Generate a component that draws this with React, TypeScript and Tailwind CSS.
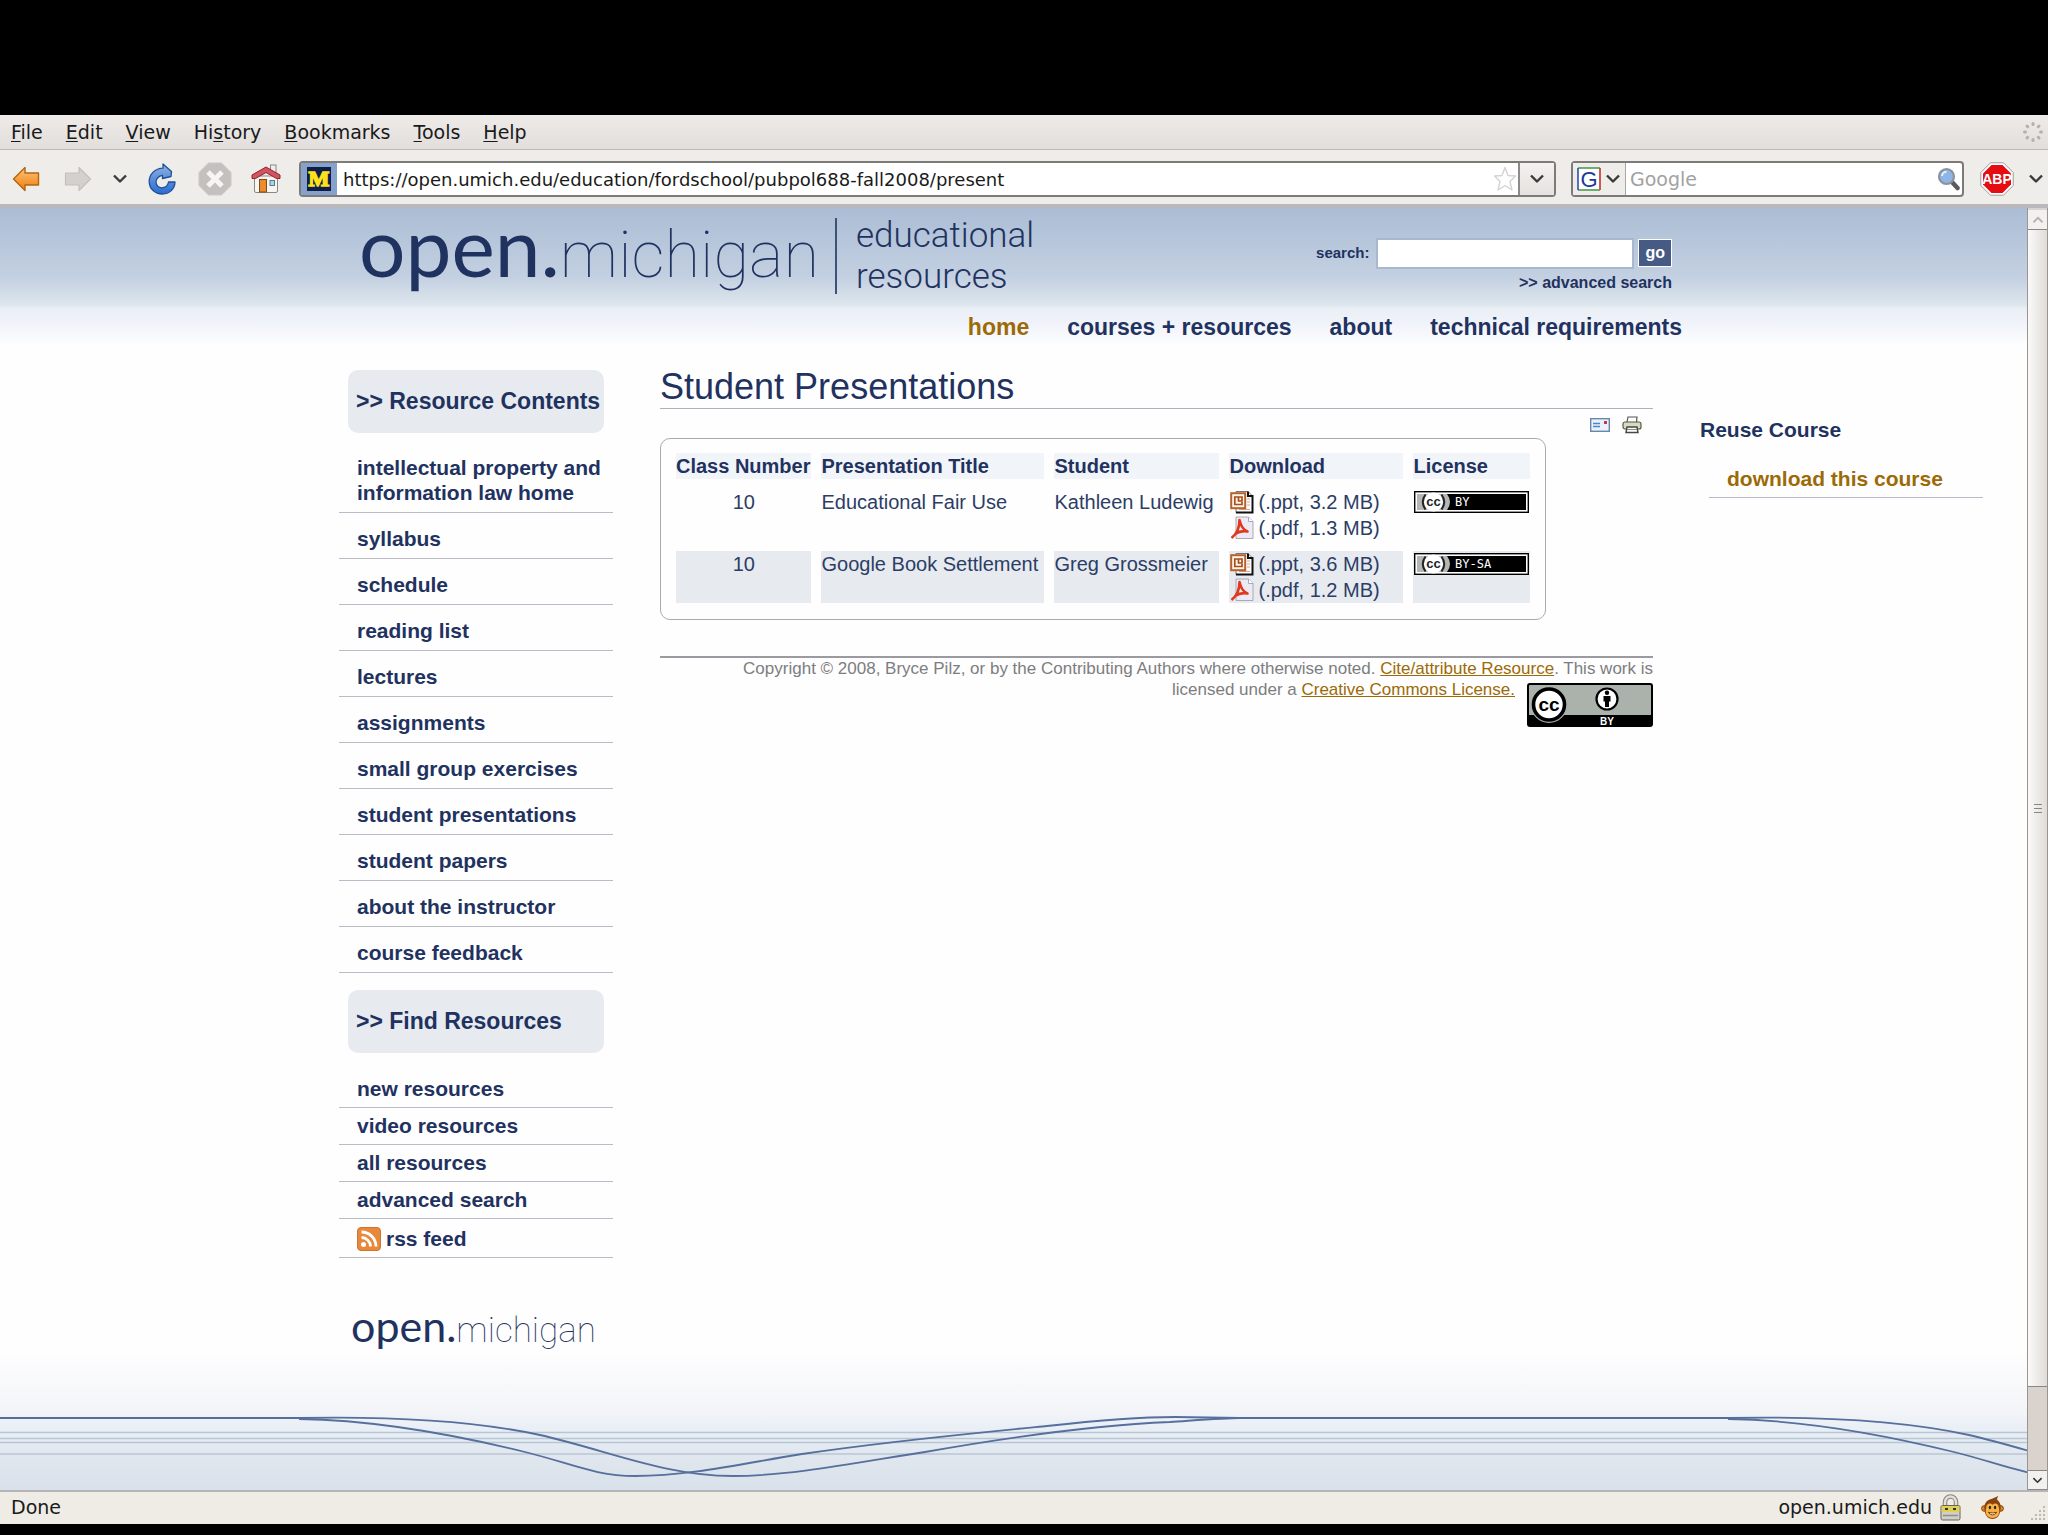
import React from "react";

function ChevronDown({ size = 16, color = "#3a3a3a" }: { size?: number; color?: string }) {
  return (
    <svg width={size} height={size} viewBox="0 0 16 16" aria-hidden="true">
      <path d="M2 4.5 L8 10.5 L14 4.5" fill="none" stroke={color} strokeWidth="2.4" strokeLinejoin="round" />
    </svg>
  );
}

function MenuItem({ before = "", hot, after }: { before?: string; hot: string; after: string }) {
  return (
    <button type="button" className="whitespace-nowrap">
      {before}
      <span className="underline underline-offset-2">{hot}</span>
      {after}
    </button>
  );
}

function Spinner() {
  return (
    <svg width="22" height="22" viewBox="0 0 22 22" aria-hidden="true">
      {[0, 45, 90, 135, 180, 225, 270, 315].map((a) => (
        <rect key={a} x="9.5" y="1" width="3" height="4" rx="1.5" fill="#b3b0ad" transform={`rotate(${a} 11 11)`} />
      ))}
    </svg>
  );
}

function MenuBar() {
  return (
    <nav className="flex h-[35px] items-center gap-[23px] border-b border-[#bdb9b6] bg-linear-to-b from-[#eeebe9] to-[#e2dedb] pl-[11px] pr-1 text-[19px] text-[#1a1a1a]">
      <MenuItem hot="F" after="ile" />
      <MenuItem hot="E" after="dit" />
      <MenuItem hot="V" after="iew" />
      <MenuItem before="Hi" hot="s" after="tory" />
      <MenuItem hot="B" after="ookmarks" />
      <MenuItem hot="T" after="ools" />
      <MenuItem hot="H" after="elp" />
      <span className="ml-auto">
        <Spinner />
      </span>
    </nav>
  );
}

function BackIcon() {
  return (
    <svg width="28" height="26" viewBox="0 0 28 26" aria-hidden="true">
      <defs>
        <linearGradient id="back" x1="0" y1="0" x2="0" y2="1">
          <stop offset="0" stopColor="#fcc57c" />
          <stop offset="1" stopColor="#ee7d0c" />
        </linearGradient>
      </defs>
      <path d="M1.5 13 L13 1.5 V7 H26.5 V19 H13 V24.5 Z" fill="url(#back)" stroke="#b5640e" strokeWidth="1.4" strokeLinejoin="round" />
    </svg>
  );
}

function ForwardIcon() {
  return (
    <svg width="28" height="26" viewBox="0 0 28 26" aria-hidden="true">
      <path d="M26.5 13 L15 1.5 V7 H1.5 V19 H15 V24.5 Z" fill="#d3d0cd" stroke="#c3c0bd" strokeWidth="1.2" strokeLinejoin="round" />
    </svg>
  );
}

function ReloadIcon() {
  return (
    <svg width="28" height="32" viewBox="0 0 28 32" aria-hidden="true">
      <defs>
        <linearGradient id="reload" x1="0" y1="0" x2="0" y2="1">
          <stop offset="0" stopColor="#8fb3e3" />
          <stop offset="1" stopColor="#2a6bd0" />
        </linearGradient>
      </defs>
      <path
        d="M15 1 L23.5 8.5 L23 13.5 L14.5 15.5 V12.3 C10.500 12.8 8 16 8 19 C8 23 11 25.3 15 24.7 C18 24.2 20 22 20.500 19 H27 C26.8 26 21.500 31 14.500 31 C7 31 1.200 26 1.200 18.500 C1.200 11 7 5.500 15 5.200 Z"
        fill="url(#reload)"
        stroke="#1f4f9c"
        strokeWidth="1.3"
        strokeLinejoin="round"
      />
    </svg>
  );
}

function StopIcon() {
  return (
    <svg width="34" height="34" viewBox="0 0 34 34" aria-hidden="true">
      <path d="M10.5 1 H23.5 L33 10.5 V23.5 L23.5 33 H10.5 L1 23.5 V10.5 Z" fill="#c3c0bd" stroke="#cbc8c5" />
      <path d="M10 10 L24 24 M24 10 L10 24" stroke="#f6f5f4" strokeWidth="5" />
    </svg>
  );
}

function HomeIcon() {
  return (
    <svg width="30" height="30" viewBox="0 0 30 30" aria-hidden="true">
      <rect x="19.5" y="1" width="5.5" height="9" fill="#eee" stroke="#888" />
      <path d="M3.500 12 H26.5 V27 Q26.5 28.5 25 28.5 H5 Q3.500 28.5 3.500 27 Z" fill="#f7f5f2" stroke="#8c8782" />
      <path d="M15 3 L29 11 V14.500 H25.500 L15 8.500 L4.500 14.500 H1 V11 Z" fill="#cf5560" stroke="#96202b" strokeLinejoin="round" />
      <rect x="8.500" y="15.500" width="7" height="12.500" fill="#ef8a2a" stroke="#7c4a1b" />
      <rect x="19" y="16.500" width="4.500" height="5" fill="#a9d5e8" stroke="#5e7a88" />
    </svg>
  );
}

function MichiganFavicon() {
  return (
    <svg width="36" height="32" viewBox="0 0 36 32" aria-hidden="true">
      <rect width="36" height="32" fill="#86a1cc" />
      <rect x="6" y="4" width="24" height="24" fill="#0d1e4b" />
      <text x="18" y="23" textAnchor="middle" fontSize="22" fontWeight="700" fontFamily="Liberation Serif, serif" fill="#ffe11a" stroke="#ffe11a" strokeWidth="1.6">
        M
      </text>
    </svg>
  );
}

function StarIcon() {
  return (
    <svg width="24" height="28" viewBox="0 0 24 28" aria-hidden="true">
      <path d="M12 2.500 L15 10.500 L22.500 11 L17 16.600 L19 25 L12 20.500 L5 25 L7 16.600 L1.500 11 L9 10.500 Z" fill="#fefefe" stroke="#d3d3d3" strokeWidth="1.400" strokeLinejoin="round" />
    </svg>
  );
}

function MagnifierIcon() {
  return (
    <svg width="24" height="24" viewBox="0 0 24 24" aria-hidden="true">
      <path d="M15 15 L20.500 21" stroke="#5b5b5b" strokeWidth="4.500" strokeLinecap="round" />
      <circle cx="9.500" cy="9.500" r="7.500" fill="#8db6e6" stroke="#8b929c" strokeWidth="2.200" />
      <path d="M5 9 A4.500 4.500 0 0 1 9.500 4.700" stroke="#e6f1fc" strokeWidth="2" fill="none" />
    </svg>
  );
}

function GoogleIcon() {
  return (
    <svg width="24" height="24" viewBox="0 0 24 24" aria-hidden="true">
      <rect x="1" y="1" width="22" height="22" fill="#fff" />
      <path d="M1 1 H23" stroke="#4f9a4f" strokeWidth="1.600" />
      <path d="M23 1 V23" stroke="#c32f2f" strokeWidth="1.600" />
      <path d="M1 23 H23" stroke="#4f9a4f" strokeWidth="1.600" />
      <path d="M1 1 V23" stroke="#2b4fb0" strokeWidth="1.600" />
      <text x="12" y="20" textAnchor="middle" fontSize="22" fontFamily="Liberation Sans, sans-serif" fill="#1b3a9a">
        G
      </text>
    </svg>
  );
}

function AdblockIcon() {
  return (
    <svg width="34" height="34" viewBox="0 0 34 34" aria-hidden="true">
      <path d="M10.500 .8 H23.500 L33.200 10.500 V23.500 L23.500 33.200 H10.500 L.8 23.500 V10.500 Z" fill="#fff" stroke="#9a9a9a" />
      <path d="M11.500 3 H22.500 L31 11.500 V22.500 L22.500 31 H11.500 L3 22.500 V11.500 Z" fill="#e30d12" />
      <text x="17" y="22" textAnchor="middle" fontSize="14" fontWeight="700" fontFamily="Liberation Sans, sans-serif" fill="#fff">
        ABP
      </text>
    </svg>
  );
}

function Toolbar() {
  return (
    <div className="flex h-[58px] items-center border-b-4 border-[#b9b9bd] bg-[#efedea] pl-3 pr-1 pt-1">
      <div className="flex w-[287px] shrink-0 items-center">
        <button type="button" aria-label="Back" className="w-[52px]">
          <BackIcon />
        </button>
        <button type="button" aria-label="Forward" className="w-[48px]">
          <ForwardIcon />
        </button>
        <button type="button" aria-label="Recent pages" className="w-[36px]">
          <ChevronDown />
        </button>
        <button type="button" aria-label="Reload" className="w-[50px]">
          <ReloadIcon />
        </button>
        <button type="button" aria-label="Stop" className="w-[53px]">
          <StopIcon />
        </button>
        <button type="button" aria-label="Home">
          <HomeIcon />
        </button>
      </div>
      <div className="flex h-9 min-w-0 flex-1 items-center rounded-sm border-2 border-[#7d7a77] bg-white">
        <MichiganFavicon />
        <input
          aria-label="Location"
          defaultValue="https://open.umich.edu/education/fordschool/pubpol688-fall2008/present"
          className="ml-[6px] min-w-0 flex-1 bg-transparent text-[18px] text-[#1a1a1a] outline-none"
        />
        <button type="button" aria-label="Bookmark this page" className="mr-px">
          <StarIcon />
        </button>
        <button type="button" aria-label="Show history" className="flex h-full w-[36px] items-center justify-center border-l-2 border-[#8d8a87] bg-linear-to-b from-[#f4f2f0] to-[#e4e1de]">
          <ChevronDown />
        </button>
      </div>
      <div className="ml-[15px] flex h-9 w-[393px] items-center rounded-sm border-2 border-[#7d7a77] bg-white">
        <button type="button" aria-label="Choose search engine" className="flex h-full w-[53px] items-center justify-center gap-1 border-r border-[#a9a6a3] bg-[#efedea]">
          <GoogleIcon />
          <ChevronDown />
        </button>
        <input aria-label="Web search" placeholder="Google" className="ml-1 min-w-0 flex-1 bg-transparent text-[19px] outline-none placeholder:text-[#a2a2a2]" />
        <button type="button" aria-label="Search" className="mr-px">
          <MagnifierIcon />
        </button>
      </div>
      <button type="button" aria-label="Adblock Plus" className="ml-4">
        <AdblockIcon />
      </button>
      <button type="button" aria-label="Adblock menu" className="ml-[14px]">
        <ChevronDown />
      </button>
    </div>
  );
}

function HeaderLogo() {
  return (
    <div className="flex items-center font-normal text-[#1f3260]">
      <a href="#home" className="-ml-[2px] flex items-baseline pb-3 leading-[72px]">
        <span className="font-['Lato'] text-[82px]">open.</span>
        <span className="font-['Roboto'] text-[65px] font-thin">michigan</span>
      </a>
      <div className="ml-4 flex h-[76px] items-center border-l-2 border-[#3d5278] pl-[19px] font-['Roboto'] text-[35px] font-light leading-[41px]">
        <p>
          educational
          <br />
          resources
        </p>
      </div>
    </div>
  );
}

function Header() {
  return (
    <header className="h-[138px] bg-[linear-gradient(#abbdd5,#c3d0e1_50%,#dde6ed_70%,#eaeff5_73%,#f0f3fa_84%,#fefefe)] pl-[361px] pr-[339px] font-bold text-[#1f3260]">
      <div className="flex h-[96px] items-center justify-between">
        <HeaderLogo />
        <form className="mr-4 flex flex-col items-end gap-[2px] pt-5 text-[16px]" onSubmit={(e) => e.preventDefault()}>
          <div className="flex items-center">
            <label htmlFor="site-search" className="text-[15px]">
              search:
            </label>
            <input id="site-search" className="ml-[7px] h-[31px] w-[258px] border-2 border-[#a9b8cf] bg-white px-1" />
            <button type="submit" className="ml-1 h-[28px] border border-white bg-[#465a84] px-[6px] text-white">
              go
            </button>
          </div>
          <a href="#advanced">&gt;&gt; advanced search</a>
        </form>
      </div>
      <nav className="mr-[6px] flex justify-end gap-[38px] pt-[9px] text-[23px] leading-7">
        <a href="#home" className="text-[#9c6a06]">home</a>
        <a href="#courses">courses + resources</a>
        <a href="#about">about</a>
        <a href="#technical">technical requirements</a>
      </nav>
    </header>
  );
}

const contents = [
  "intellectual property and information law home",
  "syllabus",
  "schedule",
  "reading list",
  "lectures",
  "assignments",
  "small group exercises",
  "student presentations",
  "student papers",
  "about the instructor",
  "course feedback",
];

const finders = ["new resources", "video resources", "all resources", "advanced search"];

function SideHeading({ children }: { children: React.ReactNode }) {
  return <h2 className="mx-[9px] flex h-[63px] items-center whitespace-nowrap rounded-[10px] bg-[#e7ebf0] pl-2 text-[23px]">{children}</h2>;
}

function RssIcon() {
  return (
    <svg width="24" height="24" viewBox="0 0 24 24" aria-hidden="true">
      <rect x=".5" y=".5" width="23" height="23" rx="3.500" fill="#e8883a" stroke="#cf762c" />
      <circle cx="6.500" cy="17.500" r="2.500" fill="#fff" />
      <path d="M4.500 10.500 A9 9 0 0 1 13.500 19.500 M4.500 5 A14.500 14.500 0 0 1 19 19.500" fill="none" stroke="#fff" strokeWidth="2.800" />
    </svg>
  );
}

function Sidebar() {
  return (
    <aside className="w-[274px] shrink-0 pt-6 font-bold text-[#1f3260]">
      <SideHeading>&gt;&gt; Resource Contents</SideHeading>
      <ul className="mt-[15px] text-[21px] leading-[25px]">
        {contents.map((c) => (
          <li key={c} className="border-b border-[#b9bcc6] pb-[7px] pl-[18px] pr-2 pt-[13px] first:pt-[7px]">
            <a href="#section">{c}</a>
          </li>
        ))}
      </ul>
      <div className="mt-[17px]">
        <SideHeading>&gt;&gt; Find Resources</SideHeading>
      </div>
      <ul className="mt-[18px] text-[21px] leading-[25px]">
        {finders.map((c) => (
          <li key={c} className="border-b border-[#b9bcc6] pb-[6px] pl-[18px] pt-[5px]">
            <a href="#find">{c}</a>
          </li>
        ))}
        <li className="border-b border-[#b9bcc6] pb-[6px] pl-[18px] pt-[7px]">
          <a href="#rss" className="flex items-center gap-[5px]">
            <RssIcon />
            rss feed
          </a>
        </li>
      </ul>
      <a href="#home" className="ml-3 mt-[46px] flex items-baseline font-normal leading-[44px]">
        <span className="font-['Lato'] text-[43px]">open.</span>
        <span className="font-['Roboto'] text-[35px] font-thin">michigan</span>
      </a>
    </aside>
  );
}

function MailIcon() {
  return (
    <svg width="20" height="14" viewBox="0 0 20 14" aria-hidden="true">
      <rect x=".7" y=".7" width="18.600" height="12.600" fill="#e9f2fb" stroke="#6a86ad" strokeWidth="1.400" />
      <path d="M3 5.500 H10 M3 8.500 H10" stroke="#4d86c6" strokeWidth="1.500" />
      <rect x="14" y="3" width="3" height="3" fill="#c23a4a" />
    </svg>
  );
}

function PrinterIcon() {
  return (
    <svg width="20" height="18" viewBox="0 0 20 18" aria-hidden="true">
      <path d="M5 6 L6 1 H15 L14.500 6" fill="#fff" stroke="#55574f" strokeWidth="1.200" />
      <rect x="1" y="6" width="18" height="7" rx="2" fill="#d9dabd" stroke="#55574f" strokeWidth="1.200" />
      <path d="M5 11 H15 L16 16.500 H4 Z" fill="#fff" stroke="#44463f" strokeWidth="1.400" />
      <path d="M5 13.500 H15" stroke="#888" />
    </svg>
  );
}

function PptIcon() {
  return (
    <svg width="24" height="24" viewBox="0 0 24 24" className="shrink-0" aria-hidden="true">
      <path d="M6 1.500 H18 L22.500 6 V22.500 H6 Z" fill="#fff" stroke="#777" />
      <path d="M18 1.500 V6 H22.500 V22.500 H6" fill="none" stroke="#111" strokeWidth="2" />
      <path d="M17 9 H20 M17 12 H20 M17 15 H20 M9 19.500 H20" stroke="#d9a48a" strokeWidth="1.200" />
      <rect x="1.200" y="3.200" width="14" height="15" fill="#fff6ea" stroke="#b5622f" strokeWidth="2" />
      <path d="M8.500 7 H4.800 V14.500 H12 V12 M8.500 11 V7 H12 V11 Z" fill="none" stroke="#a94c1c" strokeWidth="1.700" />
    </svg>
  );
}

function PdfIcon() {
  return (
    <svg width="24" height="24" viewBox="0 0 24 24" className="shrink-0" aria-hidden="true">
      <path d="M6 1 H18.500 L23 5.500 V22.500 H6 Z" fill="#eceaf3" stroke="#a9a8b8" />
      <path d="M18.500 1 V5.500 H23" fill="#fff" stroke="#a9a8b8" />
      <path d="M1.500 22 C6 18.500 9.500 12 9.500 4 C11 10.500 13.500 14 17.500 15.500 C12.500 14.500 8 16 5 18" fill="none" stroke="#df3a1e" strokeWidth="2.600" strokeLinejoin="round" />
    </svg>
  );
}

function LicenseBadge({ label }: { label: string }) {
  return (
    <svg width="115" height="22" viewBox="0 0 115 22" role="img" aria-label={`Creative Commons ${label}`} className="mt-[2px]">
      <rect x=".7" y=".7" width="113.600" height="20.600" fill="#fff" stroke="#000" strokeWidth="1.400" />
      <rect x="3" y="3" width="109" height="16" fill="#000" />
      <path d="M3 3 H33 Q39 11 33 19 H3 Z" fill="#b4b7b4" />
      <circle cx="19.500" cy="11" r="9.500" fill="#fff" />
      <path d="M11.500 3.500 Q6 11 11.500 18.500 M27.500 3.500 Q33 11 27.500 18.500" fill="none" stroke="#222" strokeWidth="2" />
      <text x="19.500" y="15" textAnchor="middle" fontSize="13" fontWeight="700" fontFamily="Liberation Sans, sans-serif" fill="#222">
        cc
      </text>
      <text x="41" y="15" fontSize="12" fontWeight="400" fontFamily="DejaVu Sans Mono, monospace" fill="#fff">
        {label}
      </text>
    </svg>
  );
}

const rows = [
  { n: "10", title: "Educational Fair Use", student: "Kathleen Ludewig", ppt: "(.ppt, 3.2 MB)", pdf: "(.pdf, 1.3 MB)", license: "BY", shaded: false },
  { n: "10", title: "Google Book Settlement", student: "Greg Grossmeier", ppt: "(.ppt, 3.6 MB)", pdf: "(.pdf, 1.2 MB)", license: "BY-SA", shaded: true },
];

function Presentations() {
  return (
    <div className="w-fit rounded-[10px] border border-[#a9abb4] px-[5px] pb-[6px] pt-1">
      <table className="border-separate border-spacing-[10px] text-left text-[20px] leading-[26px] whitespace-nowrap text-[#2c3d66]">
        <thead>
          <tr className="text-[#1f3260] [&>th]:bg-[#f1f4f9]">
            <th>Class Number</th>
            <th className="w-[223px] pl-px">Presentation Title</th>
            <th className="w-[165px] pl-px">Student</th>
            <th className="w-[174px] pl-px">Download</th>
            <th className="w-[117px] pl-px">License</th>
          </tr>
        </thead>
        <tbody>
          {rows.map((r) => (
            <tr key={r.title} className={r.shaded ? "align-top [&>td]:bg-[#e7ebf0] [&>td]:pl-px" : "align-top [&>td]:pl-px"}>
              <td className="text-center">{r.n}</td>
              <td>{r.title}</td>
              <td>{r.student}</td>
              <td>
                <a href="#ppt" className="flex items-center gap-[5px]">
                  <PptIcon />
                  {r.ppt}
                </a>
                <a href="#pdf" className="flex items-center gap-[5px]">
                  <PdfIcon />
                  {r.pdf}
                </a>
              </td>
              <td>
                <LicenseBadge label={r.license} />
              </td>
            </tr>
          ))}
        </tbody>
      </table>
    </div>
  );
}

function CcBadge() {
  return (
    <svg width="126" height="44" viewBox="0 0 126 44" role="img" aria-label="Creative Commons BY" className="mt-1 shrink-0">
      <rect x="1" y="1" width="124" height="42" rx="2" fill="#aab2ab" stroke="#000" strokeWidth="2" />
      <rect x="1" y="32" width="124" height="11" fill="#000" />
      <circle cx="22" cy="21.500" r="18.500" fill="#aab2ab" />
      <circle cx="22" cy="21.500" r="15.500" fill="#fff" stroke="#000" strokeWidth="3.600" />
      <text x="22" y="27.500" textAnchor="middle" fontSize="19" fontWeight="700" fontFamily="Liberation Sans, sans-serif">
        cc
      </text>
      <circle cx="80" cy="16" r="10.500" fill="#fff" stroke="#000" strokeWidth="2.200" />
      <circle cx="80" cy="9.800" r="2.200" />
      <path d="M76.500 13 H83.500 V18.500 H82 V24 H78 V18.500 H76.500 Z" />
      <text x="80" y="41.500" textAnchor="middle" fontSize="10" fontWeight="700" fontFamily="Liberation Sans, sans-serif" fill="#fff">
        BY
      </text>
    </svg>
  );
}

function Main() {
  return (
    <main className="ml-[47px] min-w-0 flex-1 pt-[19px]">
      <h1 className="border-b border-[#adb1bb] text-[36px] leading-[43px] text-[#1f3260]">Student Presentations</h1>
      <div className="flex h-[29px] items-center justify-end gap-3 pr-[11px] pt-[2px]">
        <a href="#mail" aria-label="Send this page">
          <MailIcon />
        </a>
        <a href="#print" aria-label="Print this page">
          <PrinterIcon />
        </a>
      </div>
      <Presentations />
      <div className="mt-9 flex flex-wrap justify-end border-t-2 border-[#9a9aa0] text-right text-[17px] leading-[21px] text-[#7d7d80]">
        <p className="w-full">
          Copyright © 2008, Bryce Pilz, or by the Contributing Authors where otherwise noted.{" "}
          <a href="#cite" className="text-[#9c6a06] underline">Cite/attribute Resource</a>. This work is
        </p>
        <div className="flex gap-3">
          <p>
            licensed under a{" "}
            <a href="#license" className="text-[#9c6a06] underline">Creative Commons License.</a>
          </p>
          <a href="#license">
            <CcBadge />
          </a>
        </div>
      </div>
    </main>
  );
}

function ReuseColumn() {
  return (
    <aside className="ml-[47px] w-[327px] shrink-0 pt-[71px] font-bold">
      <h2 className="text-[21px] leading-[26px] text-[#1f3260]">Reuse Course</h2>
      <div className="ml-[9px] mr-[44px] mt-[23px] border-b border-[#b9bcc6] pb-[6px] pl-[18px] text-[21px] leading-[25px]">
        <a href="#download" className="whitespace-nowrap text-[#9c6a06]">download this course</a>
      </div>
    </aside>
  );
}

function Swell() {
  return (
    <>
      <path d="M299 65 C365 66 440 77 525 98 C570 109 595 122 635 122 C690 122 745 109 802 100 C890 87 975 79 1047 72 C1110 65 1140 63 1175 63 L1240 64" />
      <path d="M299 64 C400 62 480 68 540 81 C610 97 665 122 733 122 C790 122 860 108 925 98 C1010 83 1100 71 1170 68 C1200 66 1225 64 1240 64" />
      <path d="M1240 64 H1728" />
    </>
  );
}

function Waves() {
  return (
    <svg className="mt-auto block h-[136px] w-full shrink-0 bg-[linear-gradient(#fdfdfe,#f4f5f8_40%,#ebf0f7_52%,#dfe6ee_78%,#d9e1ea)]" aria-hidden="true">
      <path d="M0 78.500 H4000 M0 84.500 H4000 M0 88.500 H4000 M0 100 H4000" stroke="#b9c6d3" strokeWidth="1.300" />
      <g fill="none" stroke="#566f9c" strokeWidth="1.800">
        <path d="M0 64 H299" />
        <Swell />
        <g transform="translate(1429 0)">
          <Swell />
        </g>
      </g>
    </svg>
  );
}

function Scrollbar() {
  return (
    <div className="flex w-[21px] shrink-0 flex-col border-x border-[#9a9591] bg-[#dad2cd]">
      <button type="button" aria-label="Scroll up" className="mt-[2px] flex h-[20px] items-center justify-center border-b border-[#8a8683] bg-[#f3f1ef]">
        <svg width="12" height="12" viewBox="0 0 16 16" aria-hidden="true">
          <path d="M2 11 L8 5 L14 11" fill="none" stroke="#b5b1ae" strokeWidth="2.400" />
        </svg>
      </button>
      <div className="flex flex-1 flex-col items-center justify-center gap-[3px] border-b border-[#8a8683] bg-linear-to-r from-[#fbfaf9] to-[#dfdcd8]">
        <span className="h-px w-2 bg-[#8a8683]" />
        <span className="h-px w-2 bg-[#8a8683]" />
        <span className="h-px w-2 bg-[#8a8683]" />
      </div>
      <div className="h-[83px]" />
      <button type="button" aria-label="Scroll down" className="flex h-[20px] items-center justify-center border-y border-[#8a8683] bg-[#f3f1ef]">
        <ChevronDown size={11} />
      </button>
    </div>
  );
}

function LockIcon() {
  return (
    <svg width="21" height="28" viewBox="0 0 21 28" aria-hidden="true">
      <path d="M5 14 V9 A5.500 5.500 0 0 1 16 9 V14" fill="none" stroke="#85827d" strokeWidth="4.500" />
      <path d="M5 14 V9 A5.500 5.500 0 0 1 16 9 V14" fill="none" stroke="#e3e1dd" strokeWidth="2.500" />
      <rect x="1" y="12.500" width="19" height="14.500" rx="1.500" fill="#d0cec9" stroke="#66635f" />
      <path d="M1.500 14.500 H19.500 M1.500 17.500 H19.500" stroke="#e7d21c" strokeWidth="2" />
      <path d="M5 16 H8 M13 16 H16" stroke="#333" strokeWidth="2" />
      <path d="M3 22.500 H18" stroke="#8f8c87" strokeWidth="1.500" />
    </svg>
  );
}

function MonkeyIcon() {
  return (
    <svg width="23" height="27" viewBox="0 0 24 26" aria-hidden="true">
      <circle cx="3.600" cy="14" r="3" fill="#d98722" stroke="#8a430d" />
      <circle cx="20.400" cy="14" r="3" fill="#d98722" stroke="#8a430d" />
      <path d="M3.500 14 C3 8 7 4.500 11 4 L18 1 L16.500 4.500 C19.500 7 21 10 20.500 14 C20 21 17 25 12 25 C7 25 4 21 3.500 14 Z" fill="#8a430d" />
      <path d="M5.500 13 C5.500 8.500 10 8 12 10 C14 8 18.500 8.500 18.500 13 C20.500 20 17 24 12 24 C7 24 3.500 20 5.500 13 Z" fill="#f6b044" />
      <ellipse cx="9.300" cy="13" rx="1.200" ry="1.800" fill="#222" />
      <ellipse cx="14.700" cy="13" rx="1.200" ry="1.800" fill="#222" />
      <path d="M7.500 18 Q12 19.500 16.500 18 Q12 23.500 7.500 18 Z" fill="#fff" stroke="#7a3c0c" />
    </svg>
  );
}

const gripDots = [[13, 2], [13, 6], [13, 10], [13, 14], [9, 6], [9, 10], [9, 14], [5, 10], [5, 14], [1, 14]];

function StatusBar() {
  return (
    <footer className="flex h-[34px] items-center border-t-2 border-[#b5b5b8] bg-[#eeece5] pb-[2px] pl-[11px] pr-[2px] text-[19px] text-[#1a1a1a]">
      <span>Done</span>
      <span className="ml-auto">open.umich.edu</span>
      <span className="ml-2">
        <LockIcon />
      </span>
      <span className="ml-5">
        <MonkeyIcon />
      </span>
      <svg width="16" height="18" viewBox="0 0 16 18" className="ml-[26px] self-end" aria-hidden="true">
        <g fill="#bcb8b2">
          {gripDots.map(([x, y]) => (
            <rect key={`${x}-${y}`} x={x} y={y} width="2" height="2" />
          ))}
        </g>
      </svg>
    </footer>
  );
}

export default function App() {
  return (
    <div className="flex min-h-screen flex-col bg-black pb-[11px] pt-[115px] font-['DejaVu_Sans',sans-serif]">
      <MenuBar />
      <Toolbar />
      <div className="flex flex-1">
        <div className="flex min-w-0 flex-1 flex-col bg-[#fefefe] font-['Liberation_Sans',sans-serif]">
          <Header />
          <div className="flex pl-[339px]">
            <Sidebar />
            <Main />
            <ReuseColumn />
          </div>
          <Waves />
        </div>
        <Scrollbar />
      </div>
      <StatusBar />
    </div>
  );
}
